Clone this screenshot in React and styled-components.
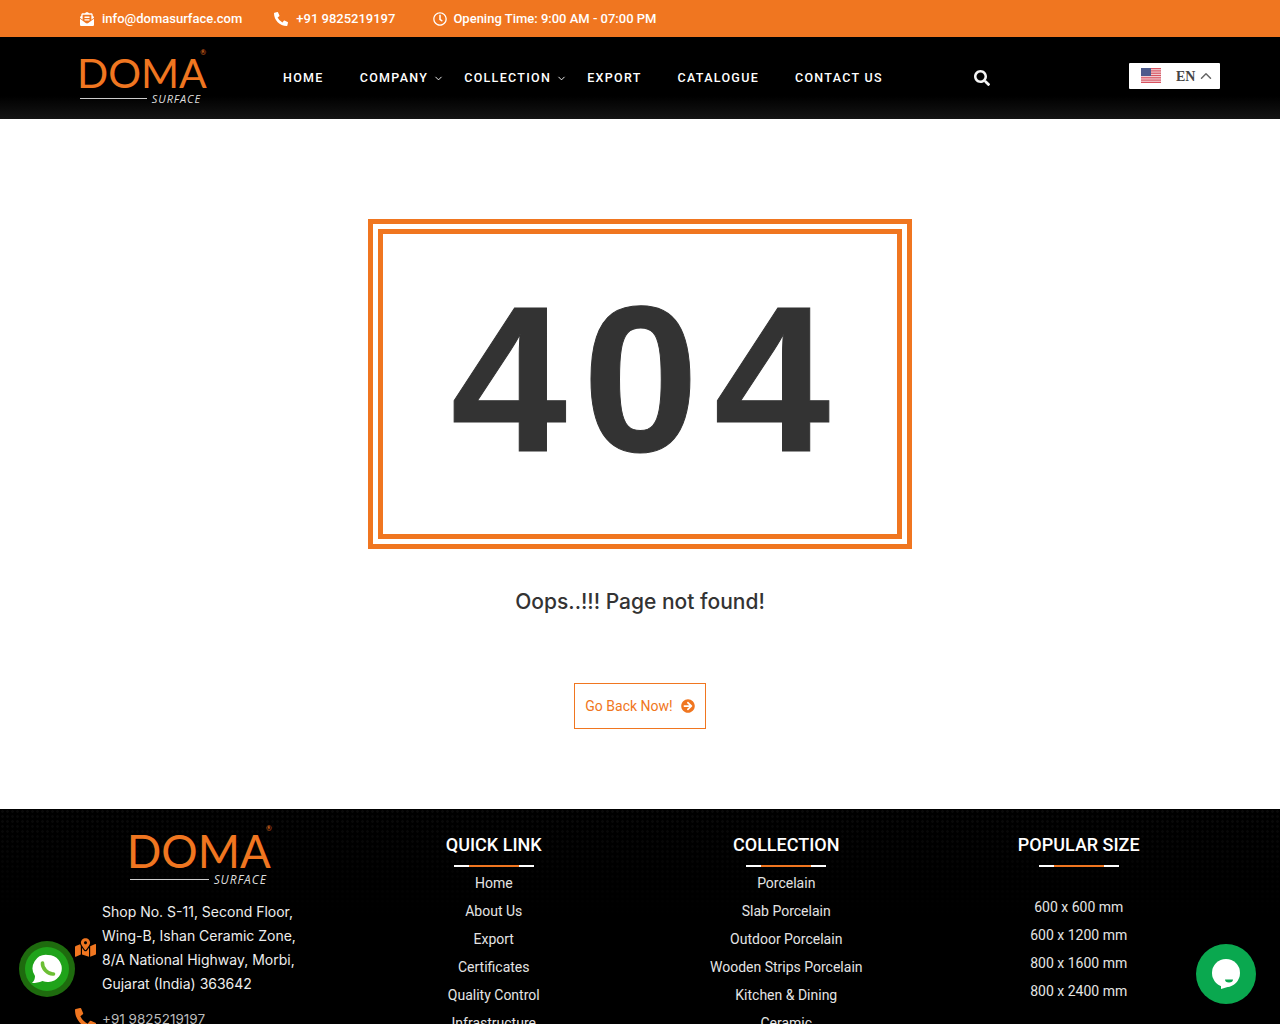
import styled, { createGlobalStyle } from "styled-components";
import {
  FaEnvelopeOpenText,
  FaPhoneAlt,
  FaRegClock,
  FaSearch,
  FaArrowCircleRight,
  FaMapMarkedAlt,
} from "react-icons/fa";
import { FiChevronDown, FiChevronUp } from "react-icons/fi";

const orange = "#f07620";

const GlobalStyle = createGlobalStyle`
  html, body {
    margin: 0;
    padding: 0;
    background: #fff;
    height: 1024px;
    overflow: hidden;
  }
  body {
    font-family: Roboto, "Liberation Sans", sans-serif;
  }
  * { box-sizing: border-box; }
`;

const TopBar = styled.div`
  height: 37px;
  background: ${orange};
  padding: 0 80px;
  display: flex;
  align-items: center;
  color: #fff;
  font-size: 13px;
  font-weight: 500;
`;

const TopItem = styled.div`
  display: flex;
  align-items: center;
  gap: ${(p) => p.$inner}px;
  margin-right: ${(p) => p.$gap}px;
  svg { font-size: 14px; }
`;

const NavBar = styled.header`
  height: 82px;
  background: linear-gradient(to bottom, #000 0, #000 72%, #141414 100%);
  padding: 0 60px 0 80px;
  display: flex;
  align-items: center;
`;

const LogoBox = styled.div`
  width: ${(p) => p.$w}px;
  color: ${orange};
  position: relative;
  font-family: Lato, sans-serif;
`;

const LogoWord = styled.div`
  font-size: ${(p) => p.$size}px;
  font-weight: 400;
  line-height: 1;
  height: ${(p) => p.$size}px;
  white-space: nowrap;
  margin-left: -3px;
`;

const LogoMark = styled.span`
  position: absolute;
  top: -4px;
  right: 0;
  font-size: 7px;
`;

const LogoLine = styled.div`
  display: flex;
  align-items: center;
  gap: 5px;
  color: #ddd;
  font-size: ${(p) => p.$size}px;
  line-height: 12px;
  font-style: italic;
  font-family: "Open Sans", sans-serif;
  letter-spacing: 0.9px;
  &::before {
    content: "";
    height: 1px;
    background: #ccc;
    flex: 1;
  }
  span { margin-right: 5px; }
`;

const NavList = styled.nav`
  display: flex;
  gap: 36px;
  margin: -2px 0 0 77px;
  width: 691px;
`;

const NavLink = styled.a`
  position: relative;
  color: #fff;
  font-size: 12.5px;
  font-weight: 500;
  letter-spacing: 1.3px;
  white-space: nowrap;
  svg {
    position: absolute;
    right: -16px;
    top: 3px;
    font-size: 11px;
  }
`;

const SearchBtn = styled.div`
  color: #f4f4f4;
  font-size: 16px;
  display: flex;
`;

const LangBox = styled.div`
  margin-left: auto;
  margin-top: -5px;
  width: 91px;
  height: 26px;
  background: #fff;
  border-radius: 1px;
  display: flex;
  align-items: center;
  padding: 0 5px 0 12px;
  color: #444;
  font-family: "Liberation Serif", serif;
  font-weight: 700;
  font-size: 14px;
  svg.chev { font-size: 18px; margin-left: auto; color: #666; }
`;

const LangText = styled.span`
  margin-left: 15px;
  padding-top: 2px;
`;

const Main = styled.main`
  height: 690px;
  padding-top: 100px;
  display: flex;
  flex-direction: column;
  align-items: center;
`;

const Frame = styled.div`
  width: 544px;
  height: 330px;
  border: 5px solid ${orange};
  padding: 5px;
`;

const FrameInner = styled.div`
  height: 100%;
  border: 5px solid ${orange};
  padding: 0 0 10px 17px;
  display: flex;
  align-items: center;
  justify-content: center;
  font-family: "Liberation Sans", sans-serif;
  font-weight: 700;
  font-size: 208px;
  letter-spacing: 16px;
  -webkit-text-stroke: 1px #333;
  line-height: 1;
  color: #333;
`;

const Oops = styled.h2`
  margin: 39px 0 0;
  font-family: Inter, sans-serif;
  font-size: 21px;
  line-height: 28px;
  font-weight: 500;
  color: #333;
`;

const BackBtn = styled.a`
  margin-top: 67px;
  width: 132px;
  height: 46px;
  border: 1px solid ${orange};
  color: ${orange};
  font-size: 14px;
  display: flex;
  align-items: center;
  justify-content: center;
  gap: 8px;
  svg { font-size: 14px; }
`;

const Footer = styled.footer`
  position: relative;
  height: 300px;
  background: #000;
  color: #fff;
  &::before {
    content: "";
    position: absolute;
    inset: 0;
    background-image: radial-gradient(#0a0a0a 1.2px, transparent 1.5px);
    background-size: 5px 5px;
    mask-image: linear-gradient(to bottom, #000 0, transparent 110px);
  }
`;

const FooterGrid = styled.div`
  position: relative;
  width: 1170px;
  margin: 0 auto;
  display: grid;
  grid-template-columns: repeat(4, 292.5px);
`;

const Col = styled.div`
  text-align: center;
`;

const AddressCol = styled.div`
  padding: 19px 20px 0;
`;

const CenterLogo = styled.div`
  display: flex;
  justify-content: center;
  margin-bottom: 14px;
  margin-left: -1px;
`;

const ContactRow = styled.div`
  display: flex;
  align-items: center;
  gap: 6px;
  margin-bottom: 11px;
  font-family: Inter, sans-serif;
  font-size: ${(p) => p.$size}px;
  line-height: 24px;
  white-space: nowrap;
  color: ${(p) => p.$color};
  svg { color: ${orange}; font-size: 21px; flex: none; }
`;

const ColTitle = styled.h4`
  margin: 0;
  padding-top: 24px;
  font-size: 18px;
  line-height: 24px;
  font-weight: 500;
  text-transform: uppercase;
  color: #fff;
`;

const TitleRule = styled.div`
  width: 80px;
  height: 2px;
  margin: 8px auto 0;
  background: linear-gradient(to right, #fff 15px, ${orange} 15px, ${orange} 65px, #fff 65px);
`;

const LinkList = styled.ul`
  list-style: none;
  margin: ${(p) => p.$top}px 0 0;
  padding: 0;
`;

const LinkItem = styled.li`
  font-size: 14px;
  line-height: 28px;
  color: #e4e4e4;
`;

const FloatWhatsapp = styled.div`
  position: fixed;
  left: 19px;
  top: 941px;
  width: 56px;
  height: 56px;
  border-radius: 50%;
  background: #1e6b0e;
  display: flex;
  align-items: center;
  justify-content: center;
`;

const WhatsappCore = styled.div`
  width: 44px;
  height: 44px;
  border-radius: 50%;
  background: #1fa31a;
  display: flex;
  align-items: center;
  justify-content: center;
`;

const FloatChat = styled.div`
  position: fixed;
  left: 1196px;
  top: 944px;
  width: 60px;
  height: 60px;
  border-radius: 50%;
  background: #0aa84f;
  display: flex;
  align-items: center;
  justify-content: center;
`;

function Logo({ width, size, small }) {
  return (
    <LogoBox $w={width}>
      <LogoWord $size={size}>DOMA</LogoWord>
      <LogoMark>®</LogoMark>
      <LogoLine $size={small}>
        <span>SURFACE</span>
      </LogoLine>
    </LogoBox>
  );
}

function UsFlag() {
  return (
    <svg width="20" height="15" viewBox="0 0 20 15">
      <rect width="20" height="15" fill="#f3d9dc" />
      {[0, 2.3, 4.6, 6.9, 9.2, 11.5, 13.8].map((y) => (
        <rect key={y} y={y} width="20" height="1.2" fill="#d8525f" />
      ))}
      <rect width="10" height="8" fill="#4c5a8c" />
    </svg>
  );
}

function WhatsappGlyph() {
  return (
    <svg width="32" height="30" viewBox="0 0 32 30">
      <path d="M17 1a14 13.500 0 1 1-5.500 26C8 28.500 5 29 1 29c2-2 3-4 3-7A13.500 13.500 0 0 1 17 1z" fill="#fff" />
      <path d="M11.500 9c-.5 5 5 11.500 11 11" fill="none" stroke="#6cbf35" strokeWidth="3.600" strokeLinecap="round" />
    </svg>
  );
}

function ChatGlyph() {
  return (
    <svg width="30" height="32" viewBox="0 0 30 32">
      <circle cx="15" cy="15" r="14" fill="#fff" />
      <path d="M10 26l0 5 10-3z" fill="#fff" />
      <path d="M14 21.500h8a4 3 0 0 1-8 0z" fill="#0aa84f" />
    </svg>
  );
}

const quickLinks = ["Home", "About Us", "Export", "Certificates", "Quality Control", "Infrastructure"];
const collection = ["Porcelain", "Slab Porcelain", "Outdoor Porcelain", "Wooden Strips Porcelain", "Kitchen & Dining", "Ceramic"];
const sizes = ["600 x 600 mm", "600 x 1200 mm", "800 x 1600 mm", "800 x 2400 mm"];

export default function App() {
  return (
    <>
      <GlobalStyle />
      <TopBar>
        <TopItem $inner={8} $gap={32}><FaEnvelopeOpenText />info@domasurface.com</TopItem>
        <TopItem $inner={8} $gap={38}><FaPhoneAlt />+91 9825219197</TopItem>
        <TopItem $inner={6}><FaRegClock />Opening Time: 9:00 AM - 07:00 PM</TopItem>
      </TopBar>
      <NavBar>
        <Logo width={126} size={41} small={11} />
        <NavList>
          <NavLink>HOME</NavLink>
          <NavLink>COMPANY<FiChevronDown /></NavLink>
          <NavLink>COLLECTION<FiChevronDown /></NavLink>
          <NavLink>EXPORT</NavLink>
          <NavLink>CATALOGUE</NavLink>
          <NavLink>CONTACT US</NavLink>
        </NavList>
        <SearchBtn><FaSearch /></SearchBtn>
        <LangBox>
          <UsFlag />
          <LangText>EN</LangText>
          <FiChevronUp className="chev" />
        </LangBox>
      </NavBar>
      <Main>
        <Frame>
          <FrameInner>404</FrameInner>
        </Frame>
        <Oops>Oops..!!! Page not found!</Oops>
        <BackBtn>Go Back Now! <FaArrowCircleRight /></BackBtn>
      </Main>
      <Footer>
        <FooterGrid>
          <AddressCol>
            <CenterLogo>
              <Logo width={142} size={45.5} small={12} />
            </CenterLogo>
            <ContactRow $size={14} $color="#eee">
              <FaMapMarkedAlt />
              <div>
                Shop No. S-11, Second Floor,<br />
                Wing-B, Ishan Ceramic Zone,<br />
                8/A National Highway, Morbi,<br />
                Gujarat (India) 363642
              </div>
            </ContactRow>
            <ContactRow $size={13.5} $color="#bbb">
              <FaPhoneAlt />
              <div>+91 9825219197</div>
            </ContactRow>
          </AddressCol>
          <Col>
            <ColTitle>Quick Link</ColTitle>
            <TitleRule />
            <LinkList $top={2}>
              {quickLinks.map((l) => <LinkItem key={l}>{l}</LinkItem>)}
            </LinkList>
          </Col>
          <Col>
            <ColTitle>Collection</ColTitle>
            <TitleRule />
            <LinkList $top={2}>
              {collection.map((l) => <LinkItem key={l}>{l}</LinkItem>)}
            </LinkList>
          </Col>
          <Col>
            <ColTitle>Popular Size</ColTitle>
            <TitleRule />
            <LinkList $top={26}>
              {sizes.map((l) => <LinkItem key={l}>{l}</LinkItem>)}
            </LinkList>
          </Col>
        </FooterGrid>
      </Footer>
      <FloatWhatsapp>
        <WhatsappCore><WhatsappGlyph /></WhatsappCore>
      </FloatWhatsapp>
      <FloatChat>
        <ChatGlyph />
      </FloatChat>
    </>
  );
}
